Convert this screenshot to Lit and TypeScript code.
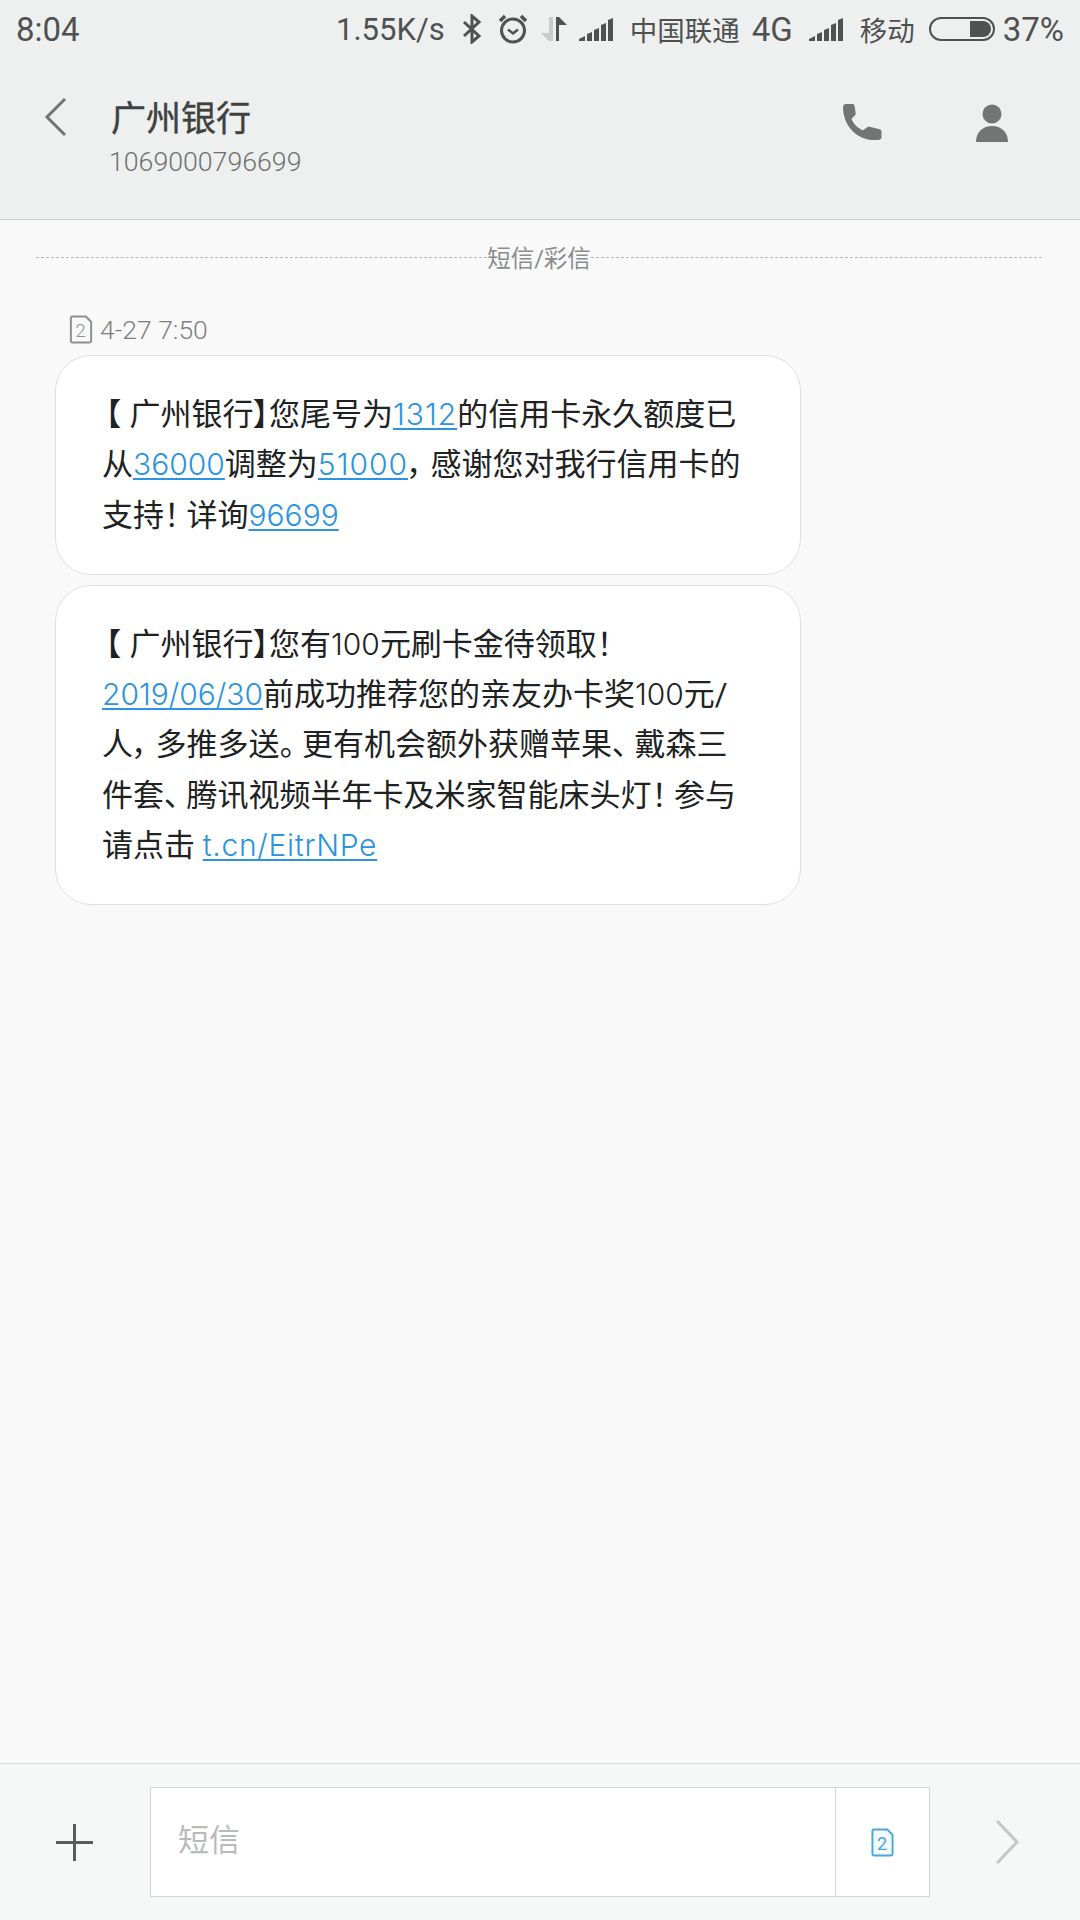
import { LitElement, html, css } from 'lit';
import { customElement } from 'lit/decorators.js';

const signal = html`<svg class="signal" width="34" height="24" viewBox="0 0 34 24" fill="#505252">
  <path d="M0 24v-2l6-3v5z M8 24v-7l5-2v9z M15 24v-11l5-2v13z M22 24v-16l5-2v18z M29 24v-21l5-2v23z"></path>
</svg>`;

const simIcon = (color: string, fill: string, w: number, h: number) => html`<svg width=${w} height=${h} viewBox="0 0 24 30">
  <path d="M1.500 3a1.500 1.500 0 0 1 1.500-1.500h14l5.500 5.500v20a1.500 1.500 0 0 1-1.500 1.500h-18a1.500 1.500 0 0 1-1.500-1.500z" fill=${fill} stroke=${color} stroke-width="2"></path>
  <text x="11.500" y="22.500" text-anchor="middle" font-family="Roboto, sans-serif" font-size="19" fill=${color}>2</text>
</svg>`;

@customElement('app-root')
export class AppRoot extends LitElement {
  static styles = css`
    :host {
      display: block;
      width: 1080px;
      height: 1920px;
      overflow: hidden;
      font-family: Roboto, "Noto Sans CJK SC", sans-serif;
    }
    .page {
      display: flex;
      flex-direction: column;
      height: 100%;
      background: #f9f9f9;
    }
    header {
      height: 219px;
      flex: none;
      background: #eef0f0;
      border-bottom: 1px solid #cfd1d1;
    }
    .status {
      display: flex;
      align-items: center;
      height: 58px;
      padding: 0 16px;
      color: #4f5151;
      font-size: 33px;
    }
    .status .time {
      flex: 1;
    }
    .status .cn {
      font-size: 27.500px;
    }
    .speed {
      margin-right: 17px;
      font-size: 31px;
    }
    .bt {
      margin-right: 16px;
    }
    .alarm {
      margin-right: 13px;
    }
    .updown {
      margin-right: 12px;
    }
    .sig {
      display: flex;
      margin-right: 17px;
    }
    .operator {
      margin-right: 12px;
    }
    .net {
      margin-right: 16px;
    }
    .batt {
      margin: 0 8px 0 14px;
    }
    .bar {
      display: flex;
      align-items: flex-start;
      padding-top: 20px;
    }
    .back {
      margin: 19px 0 0 44px;
    }
    .titles {
      flex: 1;
      margin-left: 43px;
      padding-top: 20px;
    }
    .title {
      font-size: 35px;
      line-height: 44px;
      color: #3f4141;
      -webkit-text-stroke: 0.4px #3f4141;
    }
    .number {
      margin: 4px 0 0 -2px;
      font-size: 26.700px;
      line-height: 32px;
      font-weight: 300;
      color: #6f7171;
    }
    .phone {
      margin: 25px 0 0 0;
    }
    .person {
      margin: 26px 72px 0 94px;
    }
    .thread {
      flex: 1;
      padding: 0 38px 0 36px;
    }
    .mode {
      display: flex;
      align-items: center;
      margin-top: 19px;
      height: 36px;
      color: #8a8c8c;
      font-size: 23.500px;
    }
    .mode::before,
    .mode::after {
      content: "";
      flex: 1;
      border-top: 1px dashed #b5b7b7;
    }
    .stamp {
      display: flex;
      align-items: center;
      gap: 7px;
      margin: 37px 0 0 33px;
      height: 34px;
      color: #7d7f7f;
      font-size: 26.500px;
      font-weight: 300;
    }
    .bubbles {
      display: flex;
      flex-direction: column;
      gap: 10px;
      margin: 9px 0 0 19px;
    }
    .bubble {
      width: 746px;
      box-sizing: border-box;
      padding: 34px 30px 33px 46px;
      background: #fff;
      border: 1px solid #dfe1e1;
      border-radius: 36px;
      color: #202222;
      font-size: 31px;
      line-height: 50.300px;
      white-space: nowrap;
      font-feature-settings: "palt";
    }
    .lat {
      font-family: Inter, sans-serif;
      font-size: 30px;
      font-weight: 300;
      line-height: 0;
    }
    .wide {
      letter-spacing: 1px;
    }
    .url {
      letter-spacing: 0.7px;
    }
    .open {
      padding: 0 9px 0 3px;
    }
    .mark {
      padding-right: 7px;
    }
    .bubble a {
      color: #2b93e0;
      text-decoration: underline;
      text-underline-offset: 3px;
      text-decoration-thickness: 1.500px;
    }
    .compose {
      display: flex;
      align-items: center;
      height: 156px;
      flex: none;
      background: #f6f7f7;
      border-top: 1px solid #d9dbdb;
    }
    .plus {
      margin-left: 56px;
    }
    .field {
      display: flex;
      align-items: stretch;
      width: 780px;
      height: 110px;
      box-sizing: border-box;
      margin-left: 57px;
      background: #fff;
      border: 1px solid #d2d4d4;
    }
    .hint {
      flex: 1;
      padding-left: 27px;
      color: #b9bbbb;
      font-size: 31px;
      line-height: 106px;
      border-right: 1px solid #d2d4d4;
    }
    .sim {
      display: flex;
      align-items: center;
      justify-content: center;
      width: 93px;
    }
    .send {
      margin-left: 65px;
    }
  `;

  render() {
    const open = html`<span class="open">【</span>`;
    const comma = html`<span class="mark">，</span>`;
    const bang = html`<span class="mark">！</span>`;
    const stop = html`<span class="mark">。</span>`;
    const pause = html`<span class="mark">、</span>`;
    return html`
      <div class="page">
        <header>
          <div class="status">
            <span class="time">8:04</span>
            <span class="speed">1.55K/s</span>
            <svg class="bt" width="20" height="30" viewBox="0 0 20 30" fill="none" stroke="#505252" stroke-width="3">
              <path d="M2 8l15 14-7 6V2l7 6L2 22"></path>
            </svg>
            <svg class="alarm" width="30" height="30" viewBox="0 0 30 30" fill="none" stroke="#505252">
              <circle cx="15" cy="16.500" r="11.500" stroke-width="3"></circle>
              <path d="M10 15.500l5 4 5-4" stroke-width="2.500"></path>
              <path d="M2 7l5-5M28 7l-5-5" stroke-width="3.500"></path>
            </svg>
            <svg class="updown" width="26" height="26" viewBox="0 0 26 26">
              <path d="M8 1h4v24H8l-8-8h8z" fill="#c9cbcb"></path>
              <path d="M15 1h3l8 8h-8v16h-3z" fill="#505252"></path>
            </svg>
            <span class="sig">${signal}</span>
            <span class="cn operator">中国联通</span>
            <span class="net">4G</span>
            <span class="sig">${signal}</span>
            <span class="cn">移动</span>
            <svg class="batt" width="66" height="24" viewBox="0 0 66 24">
              <rect x="1" y="1" width="64" height="22" rx="11" fill="none" stroke="#505252" stroke-width="2"></rect>
              <path d="M41 4h13a8 8 0 0 1 0 16H41z" fill="#505252"></path>
            </svg>
            <span>37%</span>
          </div>
          <div class="bar">
            <svg class="back" width="24" height="40" viewBox="0 0 24 40" fill="none" stroke="#727474" stroke-width="3">
              <path d="M21 2L3 20l18 18"></path>
            </svg>
            <div class="titles">
              <div class="title">广州银行</div>
              <div class="number">1069000796699</div>
            </div>
            <svg class="phone" width="40" height="40" viewBox="0 0 38 38">
              <path d="M1 4a3 3 0 0 1 3-3h6a2 2 0 0 1 2 2l1 7a2 2 0 0 1-1 2l-3 3c2 5 6 9 11 11l4-3a2 2 0 0 1 2-.5l10 2.500a2 2 0 0 1 1.500 2v5a3 3 0 0 1-3 3C15 37 1 22 1 4z" fill="#737575"></path>
            </svg>
            <svg class="person" width="32" height="38" viewBox="0 0 32 38" fill="#737575">
              <circle cx="16" cy="10" r="9.500"></circle>
              <path d="M0 38c0-10 7-16 16-16s16 6 16 16z"></path>
            </svg>
          </div>
        </header>
        <main class="thread">
          <div class="mode">短信/彩信</div>
          <div class="stamp">
            ${simIcon('#8c8e8e', 'none', 24, 29)}
            <span>4-27 7:50</span>
          </div>
          <div class="bubbles">
            <div class="bubble">${open}广州银行】您尾号为<a class="lat wide">1312</a>的信用卡永久额度已<br>从<a class="lat">36000</a>调整为<a class="lat wide">51000</a>${comma}感谢您对我行信用卡的<br>支持${bang}详询<a class="lat">96699</a></div>
            <div class="bubble">${open}广州银行】您有<span class="lat">100</span>元刷卡金待领取！<br><a class="lat">2019/06/30</a>前成功推荐您的亲友办卡奖<span class="lat">100</span>元/<br>人${comma}多推多送${stop}更有机会额外获赠苹果${pause}戴森三<br>件套${pause}腾讯视频半年卡及米家智能床头灯${bang}参与<br>请点击 <a class="lat url">t.cn/EitrNPe</a></div>
          </div>
        </main>
        <footer class="compose">
          <svg class="plus" width="37" height="37" viewBox="0 0 37 37" fill="#5a5c5c">
            <rect x="17" y="0" width="3" height="37"></rect>
            <rect x="0" y="17" width="37" height="3"></rect>
          </svg>
          <div class="field">
            <div class="hint">短信</div>
            <div class="sim">${simIcon('#4ba6dc', '#f2faff', 23, 29)}</div>
          </div>
          <svg class="send" width="24" height="44" viewBox="0 0 24 44" fill="none" stroke="#c6c8c8" stroke-width="3">
            <path d="M2 1l20 21L2 43"></path>
          </svg>
        </footer>
      </div>
    `;
  }
}
